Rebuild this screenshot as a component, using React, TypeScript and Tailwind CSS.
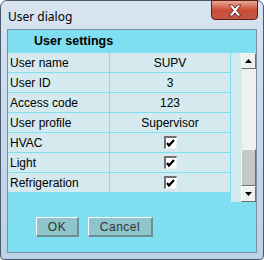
import React from 'react';

const rows: { label: string; value?: string; check?: boolean }[] = [
    { label: 'User name', value: 'SUPV' },
    { label: 'User ID', value: '3' },
    { label: 'Access code', value: '123' },
    { label: 'User profile', value: 'Supervisor' },
    { label: 'HVAC', check: true },
    { label: 'Light', check: true },
    { label: 'Refrigeration', check: true },
];

const CheckBox = () => (
    <div className="w-[13px] h-[13px] bg-white border-t-2 border-l-2 border-t-[#707070] border-l-[#707070] border-b border-r border-b-[#f0f0f0] border-r-[#f0f0f0] flex items-center justify-center">
        <svg width="9" height="9" viewBox="0 0 9 9">
            <path d="M1 4 L3 6.5 L8 1" stroke="#000" strokeWidth="2.2" fill="none" />
        </svg>
    </div>
);

const Arrow = ({ up }: { up?: boolean }) => (
    <svg width="7" height="4" viewBox="0 0 7 4">
        <path d={up ? 'M0 4 L3.5 0 L7 4 Z' : 'M0 0 L3.5 4 L7 0 Z'} fill="#000" />
    </svg>
);

const ScrollButton = ({ up }: { up?: boolean }) => (
    <div className="h-[16px] bg-[#f0f0f0] border-t border-l border-t-white border-l-white border-b border-r border-b-[#707070] border-r-[#707070] flex items-center justify-center">
        <Arrow up={up} />
    </div>
);

export default function App() {
    return (
        <div className="w-[264px] h-[260px] bg-white">
            <div
                className="w-[264px] h-[260px] rounded-t-[7px] rounded-b-[4px] border border-[#4a5a6c] bg-gradient-to-b from-[#d8e4f0] via-[#c6d9ec] to-[#bcd2e8] flex flex-col"
                style={{ fontFamily: '"Liberation Sans", Arial, sans-serif' }}
            >
                {/* Title bar */}
                <div className="h-[28px] flex items-start relative shrink-0">
                    <span
                        className="text-[12px] text-black pl-[7px] pt-[7px]"
                        style={{ fontFamily: '"Noto Sans", "Liberation Sans", sans-serif' }}
                    >
                        User dialog
                    </span>
                    <div className="absolute right-[5px] top-[-1px] w-[47px] h-[20px] rounded-b-[4px] border border-[#5a2015] bg-gradient-to-b from-[#e8a898] via-[#cb4b33] to-[#c0574a] flex items-center justify-center">
                        <svg width="16" height="13" viewBox="0 0 16 13">
                            <path d="M2 1 L5.5 1 L8 4.2 L10.5 1 L14 1 L9.8 6.5 L14 12 L10.5 12 L8 8.8 L5.5 12 L2 12 L6.2 6.5 Z" fill="#fff" stroke="#5a2a22" strokeWidth="0.9" />
                        </svg>
                    </div>
                </div>

                {/* Client area */}
                <div className="mx-[6px] h-[224px] border border-[#7d8fa2] bg-[#7fdff0] flex flex-col">
                    <div className="h-[23px] flex items-center pl-[26px] text-[12.5px] font-bold text-black">User settings</div>

                    <div className="flex h-[149px]">
                        <div className="w-[223px] flex flex-col">
                            {rows.map((r) => (
                                <div key={r.label} className="h-[20px] flex border-b border-[#7fdff0] bg-[#d5eaee] text-[12px] text-black">
                                    <div className="w-[102px] pl-[2px] flex items-center border-r border-[#7fdff0]">{r.label}</div>
                                    <div className="w-[120px] flex items-center justify-center">
                                        {r.check ? <CheckBox /> : r.value}
                                    </div>
                                    <div className="w-px bg-[#7fdff0]" />
                                </div>
                            ))}
                        </div>
                        <div className="w-[10px] bg-[#d5eaee]" />
                        <div className="w-[15px] flex flex-col bg-[#f0f0f0]">
                            <ScrollButton up />
                            <div className="h-[81px] bg-[#f0f0f0] border-l border-[#e3e3e3]" />
                            <div className="h-[37px] bg-[#c8c8c8] border-t border-l border-t-[#f4f4f4] border-l-[#f4f4f4] border-b border-r border-b-[#707070] border-r-[#707070]" />
                            <ScrollButton />
                        </div>
                    </div>

                    <div className="flex gap-[9px] pl-[28px] pt-[15px]">
                        <div className="w-[43px] h-[20px] bg-[#8ec4cc] border-t border-l border-t-white border-l-white border-b-2 border-r-2 border-b-[#6d8f94] border-r-[#6d8f94] flex items-center justify-center text-[12px] text-[#333] tracking-[0.5px]">
                            OK
                        </div>
                        <div className="w-[65px] h-[20px] bg-[#8ec4cc] border-t border-l border-t-white border-l-white border-b-2 border-r-2 border-b-[#6d8f94] border-r-[#6d8f94] flex items-center justify-center text-[12px] text-[#333] tracking-[0.5px]">
                            Cancel
                        </div>
                    </div>
                </div>
            </div>
        </div>
    );
}
